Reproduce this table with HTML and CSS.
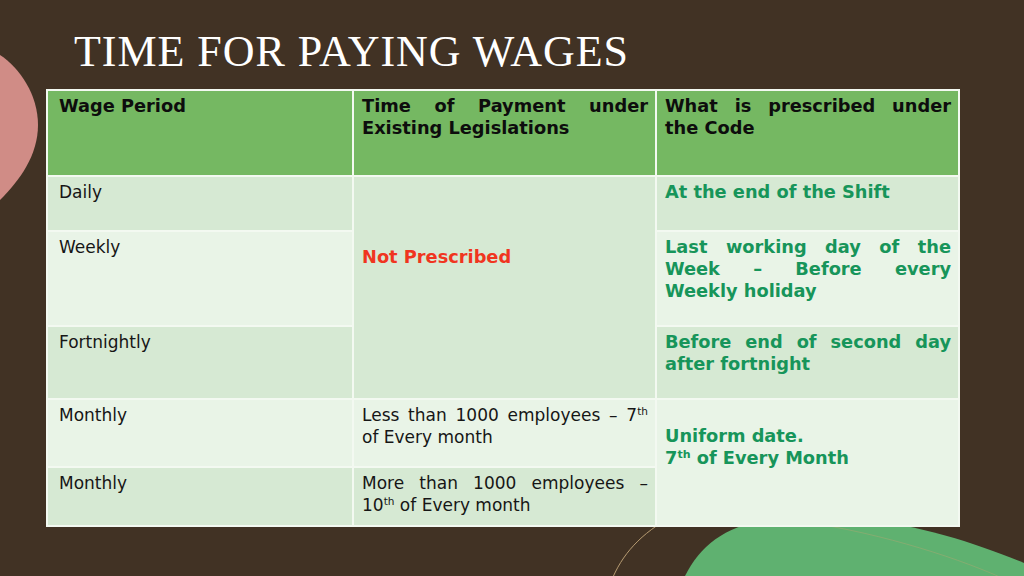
FILE: index.html
```html
<!DOCTYPE html>
<html lang="en">
<head>
<meta charset="utf-8">
<title>Time for Paying Wages</title>
<link rel="stylesheet" href="styles.css">
</head>
<body>
<div class="slide">
  <svg class="deco" width="1024" height="576" viewBox="0 0 1024 576" aria-hidden="true">
    <path d="M0 55 C20 68 38 95 38 125 C38 155 20 180 0 200 Z" fill="#d08c86"/>
    <path d="M685 576 C700 545 728 524 770 520 L860 520 C920 524 980 545 1024 563 L1024 576 Z" fill="#5fb170"/>
    <path d="M613 577 C625 550 645 530 680 512" fill="none" stroke="#b79c72" stroke-width="1"/>
    <path d="M790 520 C870 530 950 555 1000 577" fill="none" stroke="#a7a86f" stroke-opacity="0.5" stroke-width="1"/>
  </svg>
  <h1 class="title">TIME FOR PAYING WAGES</h1>
  <div class="wage-table">
    <div class="cell head c1">Wage Period</div>
    <div class="cell head c2 just"><span class="jl">Time of Payment under</span>Existing Legislations</div>
    <div class="cell head c3 just"><span class="jl">What is prescribed under</span>the Code</div>

    <div class="cell dark c1 r-daily">Daily</div>
    <div class="cell dark c2 merged-np"><span class="red">Not Prescribed</span></div>
    <div class="cell dark c3 green r-daily">At the end of the Shift</div>

    <div class="cell light c1 r-weekly">Weekly</div>
    <div class="cell light c3 green just r-weekly"><span class="jl">Last working day of the</span><span class="jl">Week – Before every</span>Weekly holiday</div>

    <div class="cell dark c1 r-fort">Fortnightly</div>
    <div class="cell dark c3 green just r-fort"><span class="jl">Before end of second day</span>after fortnight</div>

    <div class="cell light c1 r-m1">Monthly</div>
    <div class="cell light c2 just r-m1"><span class="jl">Less than 1000 employees – 7<sup>th</sup></span>of Every month</div>
    <div class="cell light c3 green merged-uni">Uniform date.<br>7<sup>th</sup> of Every Month</div>

    <div class="cell dark c1 r-m2">Monthly</div>
    <div class="cell dark c2 just r-m2"><span class="jl">More than 1000 employees –</span>10<sup>th</sup> of Every month</div>
  </div>
</div>
</body>
</html>
```

FILE: styles.css
```css
html, body {
  margin: 0;
  padding: 0;
  background: #413224;
}

.slide {
  position: relative;
  width: 1024px;
  height: 576px;
  overflow: hidden;
  background: #413224;
}

.deco {
  position: absolute;
  left: 0;
  top: 0;
  z-index: 0;
}

.title {
  position: relative;
  z-index: 1;
  margin: 0;
  padding: 27px 0 0 74px;
  height: 50px;
  font-family: "Liberation Serif", "Times New Roman", serif;
  font-weight: normal;
  font-size: 44px;
  line-height: 50px;
  color: #ffffff;
  letter-spacing: 0.95px;
}

.wage-table {
  position: relative;
  z-index: 1;
  margin: 12px 0 0 46px;
  width: 910px;
  display: grid;
  grid-template-columns: 304px 301px 301px;
  grid-template-rows: 84px 53px 93px 71px 66px 57px;
  gap: 2px;
  padding: 2px;
  background: #f3f9f1;
  font-family: "DejaVu Sans", Verdana, sans-serif;
  font-size: 17px;
  line-height: 22px;
  color: #161616;
}

.cell {
  padding: 4px 7px 0 8px;
  box-sizing: border-box;
}

.c1 { grid-column: 1; padding-left: 11px; }
.c2 { grid-column: 2; }
.c3 { grid-column: 3; }

.head {
  background: #75b862;
  font-weight: bold;
  font-size: 17.8px;
  color: #0d0d0d;
}

.dark { background: #d6e9d3; }
.light { background: #e9f4e7; }

.r-daily { grid-row: 2; }
.r-weekly { grid-row: 3; }
.r-fort { grid-row: 4; }
.r-m1 { grid-row: 5; }
.r-m2 { grid-row: 6; }

.merged-np {
  grid-row: 2 / span 3;
  padding-top: 69px;
}

.merged-uni {
  grid-row: 5 / span 2;
  padding-top: 25px;
}

.just { text-align: justify; }

.jl {
  display: block;
  text-align: justify;
  text-align-last: justify;
}

.green {
  color: #17955a;
  font-weight: bold;
  font-size: 17.8px;
}

.red {
  color: #f0351f;
  font-weight: bold;
  font-size: 17.8px;
}

sup {
  font-size: 0.62em;
  line-height: 0;
  vertical-align: 0.55em;
}
```
